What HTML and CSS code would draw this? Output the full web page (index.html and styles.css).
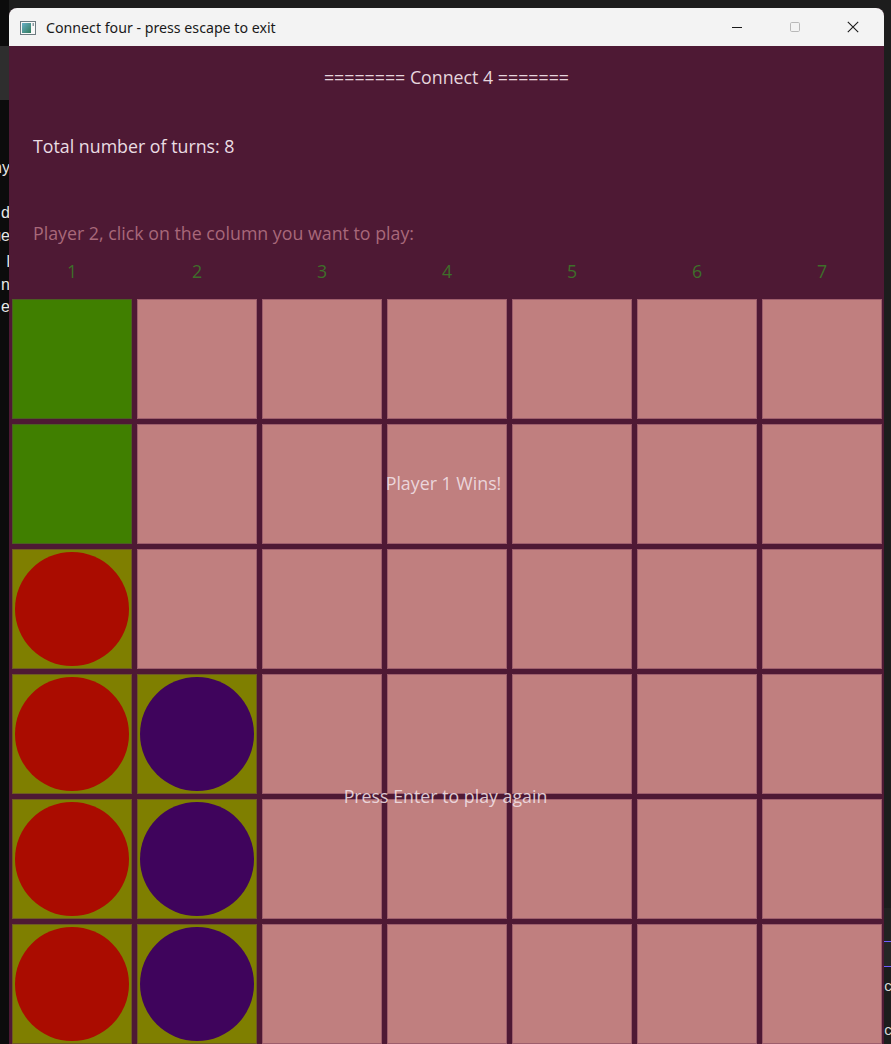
FILE: index.html
```html
<!DOCTYPE html>
<html>
<head>
<meta charset="utf-8">
<link rel="stylesheet" href="styles.css">
</head>
<body>
<div class="desk">
  <div class="left-strip">
    <div class="ls-gray"></div>
    <div class="ls-text">
      <div class="l1">ny</div>
      <div class="l2">d</div>
      <div class="l3">ue</div>
      <div class="l4">l</div>
      <div class="l5">n</div>
      <div class="l6">e</div>
    </div>
  </div>
  <div class="window">
    <div class="titlebar">
      <svg class="app-icon" width="16" height="14" viewBox="0 0 16 14">
        <defs>
          <linearGradient id="g" x1="0" y1="0" x2="1" y2="1">
            <stop offset="0" stop-color="#6ab0c8"/>
            <stop offset="1" stop-color="#2f7a5a"/>
          </linearGradient>
        </defs>
        <rect x="0.5" y="0.5" width="15" height="13" fill="#f8f8f8" stroke="#6c7a80"/>
        <rect x="2" y="2" width="9" height="10" fill="url(#g)"/>
        <rect x="12.5" y="2" width="1.5" height="3" fill="#8a9aa0"/>
      </svg>
      <span class="title">Connect four - press escape to exit</span>
      <div class="controls">
        <span class="ctl ctl-min"><svg width="12" height="12" viewBox="0 0 12 12"><line x1="1" y1="6.5" x2="11" y2="6.5" stroke="#1a1a1a" stroke-width="1"/></svg></span>
        <span class="ctl ctl-max"><svg width="12" height="12" viewBox="0 0 12 12"><rect x="1.5" y="1.5" width="9" height="9" rx="1.2" fill="none" stroke="#b8b8b8" stroke-width="1"/></svg></span>
        <span class="ctl ctl-close"><svg width="12" height="12" viewBox="0 0 12 12"><path d="M0.8 0.8 L11.2 11.2 M11.2 0.8 L0.8 11.2" stroke="#1a1a1a" stroke-width="1.1"/></svg></span>
      </div>
    </div>
    <div class="content">
      <div class="heading">======== Connect 4 =======</div>
      <div class="turns">Total number of turns: 8</div>
      <div class="prompt">Player 2, click on the column you want to play:</div>
      <div class="colnums">
        <span>1</span><span>2</span><span>3</span><span>4</span><span>5</span><span>6</span><span>7</span>
      </div>
      <div class="board-wrap">
        <div class="board">
          <div class="cell win"></div><div class="cell"></div><div class="cell"></div><div class="cell"></div><div class="cell"></div><div class="cell"></div><div class="cell"></div>
          <div class="cell win"></div><div class="cell"></div><div class="cell"></div><div class="cell"></div><div class="cell"></div><div class="cell"></div><div class="cell"></div>
          <div class="cell filled"><span class="disc red"></span></div><div class="cell"></div><div class="cell"></div><div class="cell"></div><div class="cell"></div><div class="cell"></div><div class="cell"></div>
          <div class="cell filled"><span class="disc red"></span></div><div class="cell filled"><span class="disc purple"></span></div><div class="cell"></div><div class="cell"></div><div class="cell"></div><div class="cell"></div><div class="cell"></div>
          <div class="cell filled"><span class="disc red"></span></div><div class="cell filled"><span class="disc purple"></span></div><div class="cell"></div><div class="cell"></div><div class="cell"></div><div class="cell"></div><div class="cell"></div>
          <div class="cell filled"><span class="disc red"></span></div><div class="cell filled"><span class="disc purple"></span></div><div class="cell"></div><div class="cell"></div><div class="cell"></div><div class="cell"></div><div class="cell"></div>
        </div>
        <div class="msg msg-win">Player 1 Wins!</div>
        <div class="msg msg-again">Press Enter to play again</div>
      </div>
    </div>
  </div>
  <div class="right-strip">
    <div class="rs-a"></div>
    <div class="rs-line"></div>
    <div class="rs-b"></div>
    <div class="rs-line"></div>
    <div class="rs-c">c</div>
    <div class="rs-d">c</div>
  </div>
</div>
</body>
</html>
```

FILE: styles.css
```css
html, body {
  margin: 0;
  padding: 0;
  height: 1044px;
  overflow: hidden;
  background: #1d1d1d;
}

.desk {
  display: flex;
  height: 1044px;
}

.left-strip {
  width: 9px;
  flex: none;
  padding-top: 46px;
  background: #0c0c0c;
  overflow: hidden;
}

.ls-gray {
  height: 54px;
  background: #2e2e2e;
}

.ls-text {
  font-family: "Liberation Sans", sans-serif;
  font-size: 16px;
  color: #e8e8e8;
  direction: rtl;
  text-align: right;
  white-space: nowrap;
  width: 9px;
}

.ls-text div {
  height: 22px;
  line-height: 22px;
  margin-right: -1px;
}

.ls-text .l1 { margin-top: 57px; }
.ls-text .l2 { margin-top: 23px; }
.ls-text .l3 { margin-top: 1px; }
.ls-text .l4 { margin-top: 4px; }
.ls-text .l5 { margin-top: 1px; }
.ls-text .l6 { margin-top: 0; }

.window {
  width: 875px;
  flex: none;
  margin-top: 8px;
  border-radius: 8px 8px 0 0;
  background: #4e1934;
  display: flex;
  flex-direction: column;
  overflow: hidden;
  box-shadow: 1px 0 0 #2a2a2a;
}

.titlebar {
  height: 38px;
  flex: none;
  background: #f3f3f3;
  display: flex;
  align-items: center;
  padding-left: 11px;
}

.app-icon {
  flex: none;
  margin-top: 1px;
}

.title {
  margin-left: 10px;
  font-family: "Noto Sans", sans-serif;
  font-size: 14.2px;
  color: #1a1a1a;
  white-space: nowrap;
}

.controls {
  margin-left: auto;
  display: flex;
  height: 100%;
}

.ctl {
  width: 58px;
  display: flex;
  align-items: center;
  justify-content: center;
}

.ctl-close { width: 58px; margin-right: 2px; }

.content {
  flex: 1;
  padding-top: 20px;
  font-family: "Open Sans", sans-serif;
  font-size: 17.8px;
}

.heading {
  height: 22px;
  line-height: 22px;
  text-align: center;
  color: #e6d6de;
}

.turns {
  margin-top: 47px;
  height: 22px;
  line-height: 22px;
  padding-left: 24px;
  color: #eadde3;
}

.prompt {
  margin-top: 65px;
  height: 22px;
  line-height: 22px;
  padding-left: 24px;
  color: #a8687a;
}

.colnums {
  margin-top: 16px;
  margin-left: 3px;
  display: grid;
  grid-template-columns: repeat(7, 120px);
  column-gap: 5px;
  height: 22px;
  line-height: 22px;
  color: #3e6e2a;
}

.colnums span { text-align: center; }

.board-wrap {
  position: relative;
  margin-top: 17px;
  margin-left: 3px;
}

.board {
  display: grid;
  grid-template-columns: repeat(7, 120px);
  grid-auto-rows: 120px;
  gap: 5px;
}

.cell {
  background: #c07f7f;
  box-shadow: inset 0 0 0 1px #9e5e6c;
  display: flex;
  align-items: center;
  justify-content: center;
}

.cell.win {
  background: #407f00;
  box-shadow: inset 0 0 0 1px #4c5e22;
}

.cell.filled {
  background: #7f7f00;
  box-shadow: inset 0 0 0 1px #6e5a22;
}

.disc {
  width: 114px;
  height: 114px;
  border-radius: 50%;
}

.disc.red { background: #aa0c00; }
.disc.purple { background: #3f045c; }

.msg {
  position: absolute;
  left: 0;
  right: 0;
  height: 22px;
  line-height: 22px;
  text-align: center;
  color: rgba(242, 226, 232, 0.88);
}

.msg-win { top: 173px; padding-right: 9px; }
.msg-again { top: 486px; padding-right: 5px; }

.right-strip {
  flex: 1;
  background: #1d1d1d;
  padding-top: 908px;
  display: flex;
  flex-direction: column;
  font-family: "Liberation Mono", monospace;
  font-size: 14px;
  color: #dcdcdc;
}

.rs-a { height: 33px; background: #222; }
.rs-line { height: 1px; background: #6f5cff; }
.rs-b { height: 24px; background: #262626; }
.rs-c { margin-top: 12px; height: 20px; color: #d8d8d8; }
.rs-d { margin-top: 24px; height: 20px; color: #d8d8d8; }
```
